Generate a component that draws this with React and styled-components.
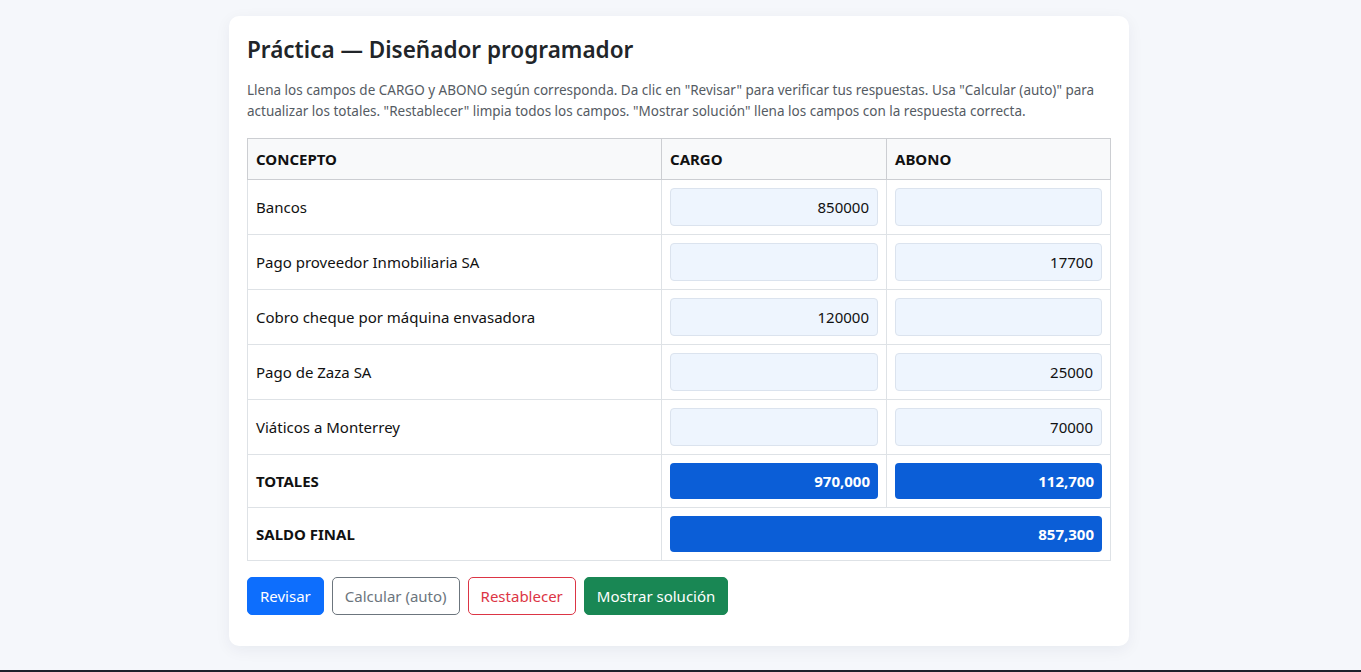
import React from "react";
import styled, { createGlobalStyle } from "styled-components";

const GlobalStyle = createGlobalStyle`
  html { background: #1c1f2a; }
  body {
    margin: 0;
    min-height: calc(100vh - 2px);
    background: #f5f7fb;
    font-family: "Noto Sans", "Open Sans", sans-serif;
    color: #212529;
  }
`;

const Page = styled.div`
  display: flex;
  justify-content: center;
  padding: 16px 3px 24px 0;
`;

const Card = styled.div`
  width: 900px;
  box-sizing: border-box;
  background: #fff;
  border-radius: 10px;
  padding: 18px 18px 31px;
  box-shadow: 0 4px 16px rgba(20, 30, 60, 0.06);
`;

const Title = styled.h1`
  margin: 0 0 14px;
  font-size: 22.5px;
  font-weight: 600;
  line-height: 32px;
  color: #212529;
`;

const Intro = styled.p`
  margin: 0 0 16px;
  font-size: 13.5px;
  line-height: 21px;
  color: #555b63;
`;

const Table = styled.table`
  width: 100%;
  border-collapse: collapse;
  table-layout: fixed;
  font-size: 15px;
`;

const Th = styled.th`
  text-align: left;
  background: #f8f9fa;
  border: 1px solid #ccced2;
  padding: 0 8px;
  height: 40px;
  font-weight: 700;
  color: #111;
  width: ${(p) => p.w || "auto"};
`;

const Td = styled.td`
  border: 1px solid #dee2e6;
  padding: 8px;
  height: ${(p) => (p.total ? "36px" : "38px")};
  font-weight: ${(p) => (p.bold ? 700 : 400)};
  color: #111;
`;

const Field = styled.div`
  box-sizing: border-box;
  height: 38px;
  border: 1px solid #dbe3ee;
  border-radius: 4px;
  background: #eef5fe;
  display: flex;
  align-items: center;
  justify-content: flex-end;
  padding: 0 8px;
  font-size: 15px;
`;

const TotalBox = styled.div`
  box-sizing: border-box;
  height: 36px;
  border-radius: 4px;
  background: #0b5ed7;
  color: #fff;
  font-weight: 700;
  display: flex;
  align-items: center;
  justify-content: flex-end;
  padding: 0 8px;
  font-size: 15px;
`;

const Actions = styled.div`
  display: flex;
  gap: 8px;
  margin-top: 16px;
`;

const tones = {
  primary: { bg: "#0d6efd", fg: "#fff", bd: "#0d6efd" },
  secondary: { bg: "#fff", fg: "#6c757d", bd: "#6c757d" },
  danger: { bg: "#fff", fg: "#dc3545", bd: "#dc3545" },
  success: { bg: "#198754", fg: "#fff", bd: "#198754" },
};

const Button = styled.button`
  height: 38px;
  padding: 0 12px;
  border-radius: 5px;
  font-family: inherit;
  font-size: 15px;
  background: ${(p) => tones[p.tone].bg};
  color: ${(p) => tones[p.tone].fg};
  border: 1px solid ${(p) => tones[p.tone].bd};
  cursor: pointer;
`;

const rows = [
  ["Bancos", "850000", ""],
  ["Pago proveedor Inmobiliaria SA", "", "17700"],
  ["Cobro cheque por máquina envasadora", "120000", ""],
  ["Pago de Zaza SA", "", "25000"],
  ["Viáticos a Monterrey", "", "70000"],
];

export default function App() {
  return (
    <>
      <GlobalStyle />
      <Page>
        <Card>
          <Title>Práctica — Diseñador programador</Title>
          <Intro>
            Llena los campos de CARGO y ABONO según corresponda. Da clic en "Revisar" para verificar tus
            respuestas. Usa "Calcular (auto)" para actualizar los totales. "Restablecer" limpia todos los
            campos. "Mostrar solución" llena los campos con la respuesta correcta.
          </Intro>
          <Table>
            <thead>
              <tr>
                <Th w="397px">CONCEPTO</Th>
                <Th w="208px">CARGO</Th>
                <Th>ABONO</Th>
              </tr>
            </thead>
            <tbody>
              {rows.map(([name, cargo, abono]) => (
                <tr key={name}>
                  <Td>{name}</Td>
                  <Td><Field>{cargo}</Field></Td>
                  <Td><Field>{abono}</Field></Td>
                </tr>
              ))}
              <tr>
                <Td bold total>TOTALES</Td>
                <Td total><TotalBox>970,000</TotalBox></Td>
                <Td total><TotalBox>112,700</TotalBox></Td>
              </tr>
              <tr>
                <Td bold total>SALDO FINAL</Td>
                <Td total colSpan={2}><TotalBox>857,300</TotalBox></Td>
              </tr>
            </tbody>
          </Table>
          <Actions>
            <Button tone="primary">Revisar</Button>
            <Button tone="secondary">Calcular (auto)</Button>
            <Button tone="danger">Restablecer</Button>
            <Button tone="success">Mostrar solución</Button>
          </Actions>
        </Card>
      </Page>
    </>
  );
}
